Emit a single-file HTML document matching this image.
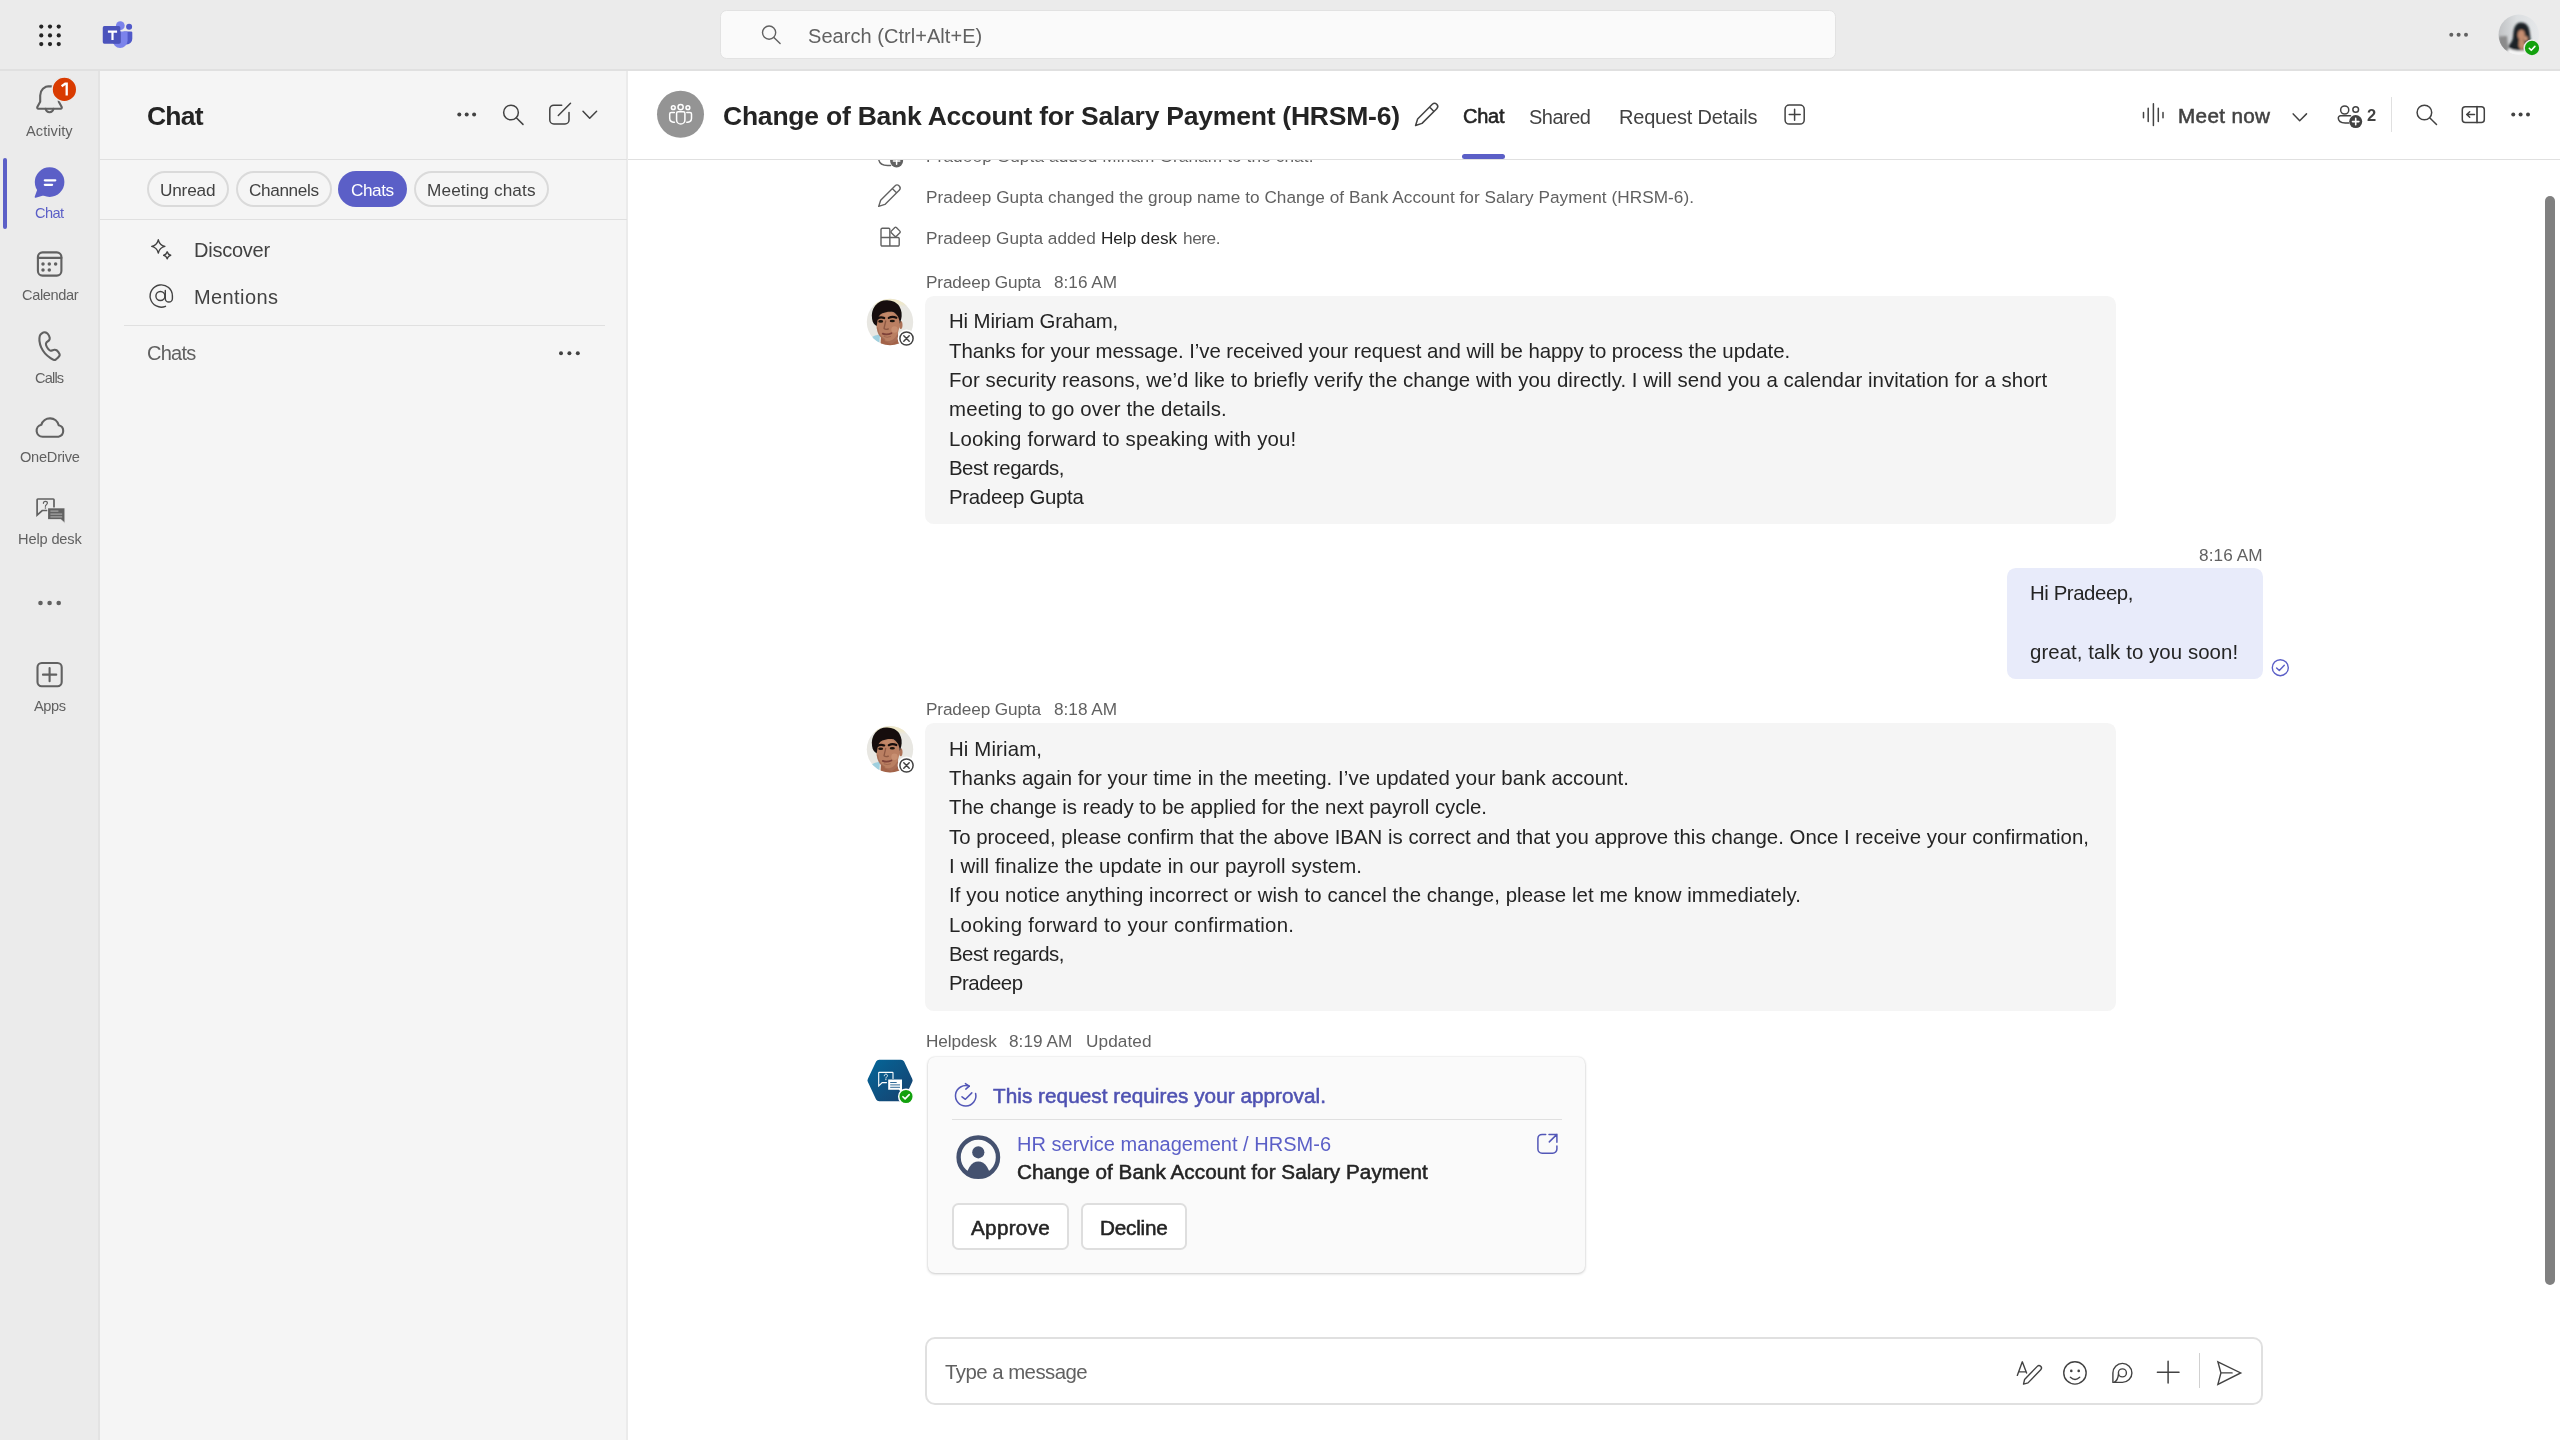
<!DOCTYPE html>
<html lang="en"><head><meta charset="utf-8"><title>Microsoft Teams</title>
<style>
*{box-sizing:border-box;margin:0;padding:0}
html,body{width:2560px;height:1440px;overflow:hidden;background:#fff;font-family:"Liberation Sans",sans-serif}
.a{position:absolute}
.t{position:absolute;white-space:nowrap;line-height:1;will-change:transform}
svg{position:absolute;overflow:visible}

</style></head>
<body>
<!-- ===== backgrounds ===== -->
<div class="a" style="left:0;top:0;width:2560px;height:70px;background:#ebebeb"></div>
<div class="a" style="left:0;top:71px;width:100px;height:1369px;background:#ebebeb"></div>
<div class="a" style="left:100px;top:71px;width:527px;height:1369px;background:#f5f5f5"></div>
<div class="a" style="left:628px;top:71px;width:1932px;height:1369px;background:#fff"></div>
<div class="a" style="left:98px;top:71px;width:2px;height:1369px;background:#e3e3e3"></div>
<div class="a" style="left:626px;top:71px;width:2px;height:1369px;background:#ebebeb"></div>
<div class="a" style="left:0;top:69px;width:2560px;height:2px;background:#e0e0e0"></div>
<!-- list panel dividers -->
<div class="a" style="left:100px;top:159px;width:527px;height:1px;background:#e0e0e0"></div>
<div class="a" style="left:100px;top:219px;width:527px;height:1px;background:#e0e0e0"></div>
<div class="a" style="left:124px;top:325px;width:481px;height:1px;background:#e0e0e0"></div>
<!-- main header divider -->
<div class="a" style="left:628px;top:159px;width:1932px;height:1px;background:#e0e0e0"></div>
<!-- search box -->
<div class="a" style="left:720px;top:10px;width:1116px;height:48.5px;background:#fafafa;border:1px solid #e2e2e2;border-radius:6.5px"></div>
<!-- rail active indicator -->
<div class="a" style="left:3px;top:158px;width:4px;height:71px;background:#5b5fc7;border-radius:2px"></div>
<!-- pills -->
<div class="a" style="left:147px;top:171px;width:82px;height:36px;border:2px solid #dadada;border-radius:18px"></div>
<div class="a" style="left:235.500px;top:171px;width:96px;height:36px;border:2px solid #dadada;border-radius:18px"></div>
<div class="a" style="left:338px;top:171px;width:69px;height:36px;background:#5b5fc7;border-radius:18px"></div>
<div class="a" style="left:414px;top:171px;width:135px;height:36px;border:2px solid #dadada;border-radius:18px"></div>
<!-- tab underline -->
<div class="a" style="left:1462px;top:154px;width:43px;height:4.5px;background:#5b5fc7;border-radius:2.5px"></div>
<!-- header vertical divider -->
<div class="a" style="left:2391px;top:97px;width:1px;height:35px;background:#e0e0e0"></div>
<!-- scrollbar -->
<div class="a" style="left:2545.2px;top:196px;width:9.7px;height:1089px;background:#808080;border-radius:5px"></div>
<!-- bubbles -->
<div class="a" style="left:925px;top:296px;width:1191px;height:228px;background:#f5f5f5;border-radius:8.8px"></div>
<div class="a" style="left:2007px;top:568.2px;width:255.8px;height:110.8px;background:#e8ebfa;border-radius:8.8px"></div>
<div class="a" style="left:925px;top:723px;width:1191px;height:288px;background:#f5f5f5;border-radius:8.8px"></div>
<!-- card -->
<div class="a" style="left:927.5px;top:1057px;width:657.5px;height:215.5px;background:#fafafa;border-radius:7px;box-shadow:0 1px 3px rgba(0,0,0,.18),0 0 2px rgba(0,0,0,.12)"></div>
<div class="a" style="left:952px;top:1119px;width:610px;height:1px;background:#e0e0e0"></div>
<div class="a" style="left:952px;top:1203px;width:117px;height:47px;background:#fff;border:2px solid #dedede;border-radius:6.5px"></div>
<div class="a" style="left:1081px;top:1203px;width:106px;height:47px;background:#fff;border:2px solid #dedede;border-radius:6.5px"></div>
<!-- compose -->
<div class="a" style="left:925px;top:1337px;width:1338px;height:68px;background:#fff;border:2px solid #e0e0e0;border-radius:10px"></div>
<div class="a" style="left:2199px;top:1353px;width:1px;height:35px;background:#d1d1d1"></div>
<svg width="2560" height="1440" viewBox="0 0 2560 1440" style="left:0;top:0" fill="none" stroke-linecap="round" stroke-linejoin="round">
<!-- ===== top bar ===== -->
<g fill="#242424" stroke="none">
<circle cx="41.25" cy="26.6" r="2.1"/><circle cx="50" cy="26.6" r="2.1"/><circle cx="58.75" cy="26.6" r="2.1"/>
<circle cx="41.25" cy="35.4" r="2.1"/><circle cx="50" cy="35.4" r="2.1"/><circle cx="58.75" cy="35.4" r="2.1"/>
<circle cx="41.25" cy="44.1" r="2.1"/><circle cx="50" cy="44.1" r="2.1"/><circle cx="58.75" cy="44.1" r="2.1"/>
</g>
<!-- teams logo -->
<g stroke="none">
<circle cx="129.1" cy="26.7" r="3" fill="#5059c9"/>
<path d="M123.5,31.4h7.6a1.2,1.2 0 0 1 1.2,1.2v6.2a5.6,5.6 0 0 1-5.6,5.6h-3.2z" fill="#5059c9"/>
<circle cx="120.3" cy="25.7" r="4.4" fill="#7b83eb"/>
<path d="M112.6,31.4h13.8a1.2,1.2 0 0 1 1.2,1.2v7.8a7.5,7.5 0 0 1-15,0z" fill="#7b83eb"/>
<path d="M112.6,31.4h8.4v10.6a1.6,1.6 0 0 1-1.6,1.6h-6.2a7.5,7.5 0 0 1-.6,-3.2z" fill="#3d4499" opacity=".55"/>
<rect x="102.75" y="26.1" width="17.6" height="17.6" rx="1.6" fill="#4b53bc"/>
<path d="M107.9,30.6h9.2v2.100h-3.500v7.200h-2.200v-7.200h-3.500z" fill="#fff"/>
</g>
<!-- search icon in box -->
<g stroke="#616161" stroke-width="1.4"><circle cx="769.1" cy="32.6" r="6.6"/><path d="M773.9,37.4L780.1,43.6"/></g>
<!-- top right dots -->
<g fill="#616161" stroke="none"><circle cx="2451.3" cy="34.7" r="2"/><circle cx="2458.6" cy="34.7" r="2"/><circle cx="2466" cy="34.7" r="2"/></g>
<!-- user avatar -->
<defs>
<clipPath id="cpU"><circle cx="2518.75" cy="34.8" r="20.2"/></clipPath>
<linearGradient id="gU" x1="0" x2="1" y1="0" y2="0"><stop offset="0" stop-color="#bfc1c3"/><stop offset=".45" stop-color="#dcdfe1"/><stop offset="1" stop-color="#e6e8ea"/></linearGradient>
<filter id="b1" x="-20%" y="-20%" width="140%" height="140%"><feGaussianBlur stdDeviation="0.8"/></filter>
<filter id="b3" x="-20%" y="-20%" width="140%" height="140%"><feGaussianBlur stdDeviation="0.7"/></filter>
<filter id="b2" x="-20%" y="-20%" width="140%" height="140%"><feGaussianBlur stdDeviation="1.2"/></filter>
</defs>
<g clip-path="url(#cpU)" stroke="none">
<rect x="2498" y="14" width="42" height="42" fill="url(#gU)"/>
<g filter="url(#b1)">
<path d="M2499,36.5l8,-.5l1.5,15h-10z" fill="#8b8b8b"/>
<path d="M2506,56c1,-6 4,-8 9,-9h10c4,1 7,3 8,9z" fill="#f4f4f4"/>
<path d="M2521,22.5c5.5,0 8,4 8.6,9c.4,4 1.4,8 .9,13c-1,4 -5,6 -9.5,6c-5,0 -10.5,0 -12.5,-4c1,-3 3.5,-4 4.3,-8c.7,-4 .2,-7 1.700,-11c1.500,-3.500 3.500,-5 6.500,-5z" fill="#1b2427"/>
<ellipse cx="2521.300" cy="35" rx="3.600" ry="5.200" fill="#c48d70"/>
<path d="M2519,40l5,0l1.500,6l-4,5l-3,-5z" fill="#c08a6c"/>
<ellipse cx="2525.800" cy="38.500" rx="2" ry="2.600" fill="#cf9a7c"/>
</g>
</g>
<circle cx="2532" cy="48" r="7.900" fill="#13a10e" stroke="#ebebeb" stroke-width="1.500"/>
<path d="M2529.300,48.300l2,2l3.600,-3.900" stroke="#fff" stroke-width="1.600"/>

<!-- ===== rail ===== -->
<g stroke="#616161" stroke-width="2.100">
<!-- bell -->
<path d="M49.500,86.100a9.300,9.300 0 0 0-9.300,9.300v6.300l-2.900,5.400a1.100,1.100 0 0 0 1,1.600h22.400a1.100,1.100 0 0 0 1,-1.600l-2.900,-5.400v-6.300a9.300,9.300 0 0 0-9.300,-9.300z"/>
<path d="M45.700,108.900a3.900,3.900 0 0 0 7.700,0"/>
</g>
<circle cx="64.400" cy="89.400" r="12.300" fill="#d93b01" stroke="#ebebeb" stroke-width="1.400"/>
<path d="M61.600,86.200l3.600,-2.500h1.500v11.800" stroke="#fff" stroke-width="2.300" stroke-linecap="butt" stroke-linejoin="miter"/>
<!-- chat (active, filled) -->
<g stroke="none" fill="#5b5fc7">
<circle cx="49.600" cy="182.100" r="14.800"/>
<path d="M37.300,189.500l-2.600,7.200a.8,.8 0 0 0 1,1l9.300,-2.600z"/>
</g>
<g stroke="#fff" stroke-width="2.200"><path d="M44.800,180.300h10.500"/><path d="M44.800,184.800h7.300"/></g>
<!-- calendar -->
<g stroke="#616161" stroke-width="2.100">
<rect x="37.900" y="252.400" width="23.500" height="23.200" rx="4.600"/>
<path d="M37.900,257.900h23.500"/>
</g>
<g fill="#616161" stroke="none"><circle cx="43" cy="264.100" r="1.750"/><circle cx="49.300" cy="264.100" r="1.750"/><circle cx="55.600" cy="264.100" r="1.750"/><circle cx="43" cy="269.900" r="1.750"/><circle cx="49.300" cy="269.900" r="1.750"/></g>
<path d="M45.00,332.33C46.04,332.38 47.00,332.99 47.78,333.89C48.56,334.79 49.46,336.67 49.69,337.71C49.92,338.75 49.72,339.33 49.17,340.14C48.62,340.95 46.91,341.76 46.39,342.57C45.87,343.38 45.75,343.96 46.04,345.00C46.33,346.04 47.37,347.86 48.12,348.82C48.88,349.77 49.51,350.58 50.56,350.73C51.60,350.87 53.33,349.75 54.38,349.69C55.42,349.63 55.94,349.63 56.81,350.38C57.67,351.13 59.18,353.25 59.58,354.20C59.99,355.16 59.81,355.27 59.24,356.11C58.66,356.95 56.98,358.60 56.11,359.24C55.24,359.87 54.95,360.10 54.03,359.93C53.10,359.76 52.06,359.29 50.56,358.19C49.05,357.09 46.56,355.13 45.00,353.33C43.44,351.54 42.11,349.51 41.18,347.43C40.25,345.35 39.68,342.74 39.44,340.83C39.21,338.92 39.44,337.19 39.79,335.97C40.14,334.76 40.66,334.15 41.53,333.54C42.40,332.93 43.96,332.27 45.00,332.33z" stroke="#616161" stroke-width="2.1"/>
<!-- cloud -->
<path d="M42.600,436.700a6,6 0 0 1-1.300,-11.850a9,9 0 0 1 17.400,.5a5.800,5.800 0 0 1-.2,11.350z" stroke="#616161" stroke-width="2.100"/>
<!-- help desk -->
<g stroke="#616161" stroke-width="1.700" stroke-linejoin="miter">
<path d="M47.500,510.500h-5.300l-5.100,4.600v-15.300a.8,.8 0 0 1 .8,-.8h15.300a.8,.8 0 0 1 .8,.8v7.500"/>
</g>
<path d="M43.400,503.300c0,-1.300 .9,-2 2,-2s2,.7 2,1.800c0,1.500 -2,1.600 -2,3.200" stroke="#616161" stroke-width="1.200"/>
<circle cx="45.400" cy="508" r=".8" fill="#616161"/>
<path d="M48,507.900h16.900v15.300l-4,-3.600h-12.900z" fill="#616161" stroke="#ebebeb" stroke-width=".8" stroke-linejoin="miter"/>
<g stroke="#a8a8a8" stroke-width="1.200" stroke-linecap="butt"><path d="M50.400,511.100h8"/><path d="M50.400,514.100h11.800"/><path d="M50.400,516.900h11.800"/></g>
<!-- rail dots -->
<g fill="#616161" stroke="none"><circle cx="40.500" cy="603" r="2.300"/><circle cx="49.600" cy="603" r="2.300"/><circle cx="58.700" cy="603" r="2.300"/></g>
<!-- apps -->
<g stroke="#616161" stroke-width="2.100"><rect x="37.500" y="663" width="24.200" height="23.300" rx="4.200"/><path d="M49.600,668v13.300M42.950,674.650h13.300"/></g>

<!-- ===== list header ===== -->
<g fill="#424242" stroke="none"><circle cx="459.300" cy="114.600" r="2"/><circle cx="466.700" cy="114.600" r="2"/><circle cx="474.100" cy="114.600" r="2"/>
<circle cx="561" cy="353.300" r="2"/><circle cx="569.400" cy="353.300" r="2"/><circle cx="577.800" cy="353.300" r="2"/></g>
<g stroke="#424242" stroke-width="1.500">
<circle cx="511" cy="112.500" r="7.350"/><path d="M516.300,117.800L523,124.400"/>
<path d="M561.700,105.200h-7.900a4,4 0 0 0-4,4v10.800a4,4 0 0 0 4,4h11.200a4,4 0 0 0 4,-4v-7.600"/>
<path d="M558.300,115.500L570.500,103.300"/>
<path d="M583,111.200l6.700,7.100l6.900,-7.100"/>
</g>
<!-- discover sparkles -->
<g stroke="#424242" stroke-width="1.400" stroke-linejoin="round">
<path d="M158.300,239.800q1.300,5.300 6.600,6.600q-5.300,1.300 -6.600,6.600q-1.300,-5.300 -6.600,-6.600q5.300,-1.300 6.600,-6.600z"/>
<path d="M167.200,251.800q.8,2.800 3.500,3.500q-2.700,.7 -3.500,3.500q-.8,-2.800 -3.500,-3.500q2.700,-.7 3.500,-3.500z"/>
</g>
<!-- mentions @ -->
<g stroke="#424242" stroke-width="1.400">
<circle cx="160.400" cy="296" r="4.500"/>
<path d="M165.300,290.400v8.100a3.550,3.550 0 0 0 7.100,0v-2.600a11.150,11.150 0 1 0-6.900,10.400"/>
</g>
</svg>
<svg width="2560" height="1440" viewBox="0 0 2560 1440" style="left:0;top:0" fill="none" stroke-linecap="round" stroke-linejoin="round">
<defs>
<clipPath id="cpP1"><circle cx="890" cy="322" r="23.200"/></clipPath>
<clipPath id="cpP2"><circle cx="890" cy="749.300" r="23.200"/></clipPath>
<linearGradient id="gH" x1="0" y1="0" x2="1" y2="1"><stop offset="0" stop-color="#04679a"/><stop offset="1" stop-color="#173f6c"/></linearGradient>
<clipPath id="cpRing"><circle cx="978.300" cy="1157.200" r="19.800"/></clipPath>
<g id="pencil"><path d="M.4,0L6.4,-3.1H27.2A3.1,3.1 0 0 1 27.2,3.1H6.4Z M23.3,-3.1V3.1"/></g>
<g id="face" stroke="none">
<rect x="-24" y="-24" width="48" height="48" fill="#e8e7e2"/>
<rect x="-24" y="-24" width="48" height="7" fill="#f0e8c4" opacity=".8" filter="url(#b2)"/>
<g filter="url(#b3)">
<path d="M-24,24l2,-7l7,-3.500l5,-1l-1,11.500z" fill="#9fd0df"/>
<path d="M-9.500,24l.5,-9l3,-4h13l2.500,5l5.500,4v4z" fill="#a3634a"/>
<path d="M-6.500,8h14.500l-.5,10l-6,4l-7,-3z" fill="#a86d55"/>
<path d="M-13.600,-2c-.4,4 0,8 1.200,11.500c1.500,4.500 5,8.500 9.500,9.500c4,.6 8,-2.500 10,-6.500c1.800,-3.500 2.600,-8 2.600,-14c-1,-6 -5,-9.500 -11.500,-9.500c-7,0 -11.200,3.500 -11.800,9z" fill="#ba7f62"/>
<ellipse cx="10.800" cy="3" rx="1.700" ry="4" fill="#ad7358"/>
<ellipse cx="4.500" cy="7.500" rx="3.200" ry="3.200" fill="#cd9678" opacity=".7"/>
<ellipse cx="-1.500" cy="-7.200" rx="6" ry="2" fill="#c58b6c" opacity=".7"/>
<path d="M-13.300,4c-2.200,-1 -4.200,-3.200 -4.600,-7c-.8,-5 .2,-10 3.200,-13.500c3,-4 7.500,-5.500 12,-5.300c5,.2 9.500,2 12,6c2.500,4 3,9 1.800,13.300l-1.300,4.200c-.3,-3.500 -1,-6.500 -3,-8.800c-1.500,-1.800 -3,-2.800 -5,-3.100c-3,-.5 -6.500,.3 -9.500,1.500c-3,1.300 -4.300,4 -4.800,7.300c-.3,2 -.5,4 -.8,5.400z" fill="#120f0c"/>
<path d="M-12.800,-3.300q3.400,-2.100 7,-.6" stroke="#160e09" stroke-width="2.200" fill="none"/>
<path d="M-1.200,-4.100q3.600,-2 7.500,-.2" stroke="#160e09" stroke-width="2.200" fill="none"/>
<ellipse cx="-9.300" cy="-.6" rx="2.500" ry="1.300" fill="#1f120c"/>
<ellipse cx="2.300" cy="-1" rx="2.600" ry="1.300" fill="#1f120c"/>
<path d="M-4.300,-1l-1.700,7.500q1.800,1.600 4.400,.4" stroke="#8d5843" stroke-width="1.300" fill="none"/>
<path d="M-7.300,11.600q4,1.800 8.800,-.4" stroke="#7e4238" stroke-width="1.700" fill="none"/>
<path d="M-6,14.600q3,1.500 6.500,0" stroke="#a0664f" stroke-width="1" fill="none"/>
<path d="M-12.500,6c.5,5 3,9.500 7,11.500" stroke="#9a6049" stroke-width="1.500" fill="none" opacity=".6"/>
</g>
</g>
<g id="xbadge">
<circle r="8.100" fill="#fff" stroke="#fff" stroke-width="1.600"/>
<circle r="6.600" fill="#fff" stroke="#424242" stroke-width="1.500"/>
<path d="M-2.700,-2.700L2.700,2.700M2.700,-2.700L-2.700,2.700" stroke="#424242" stroke-width="1.500"/>
</g>
</defs>

<!-- ===== main header ===== -->
<circle cx="680.500" cy="114.300" r="23.500" fill="#949494"/>
<g stroke="#fff" stroke-width="1.500">
<circle cx="680.600" cy="107.100" r="2.600"/><circle cx="673.300" cy="107.700" r="1.900"/><circle cx="687.900" cy="107.700" r="1.900"/>
<path d="M678,111.800h5.400a1.500,1.500 0 0 1 1.500,1.500v6.600a4.150,4.150 0 0 1-8.300,0v-6.600a1.500,1.500 0 0 1 1.500,-1.500z"/>
<path d="M674.400,112.400h-3.200a1.500,1.500 0 0 0-1.500,1.500v4.500a4,4 0 0 0 4.700,3.900"/>
<path d="M686.800,112.400h3.200a1.500,1.500 0 0 1 1.500,1.500v4.500a4,4 0 0 1-4.700,3.900"/>
</g>
<g stroke="#424242" stroke-width="1.500">
<use href="#pencil" transform="translate(1415.300,125.700) rotate(-45)"/>
<rect x="1785.100" y="105.100" width="19.100" height="19" rx="4.200"/>
<path d="M1789.200,114.600h11M1794.600,109.200v11"/>
<!-- meet now bars -->
<path d="M2143.500,112.600v5.200M2148.200,108.300v13.100M2153.400,103.700v21.800M2158.300,108.300v13.100M2163,112.600v5.200"/>
<path d="M2293.200,113.900l6.500,6.800l6.800,-6.800"/>
<!-- people add -->
<circle cx="2344.700" cy="110" r="4.050"/><circle cx="2355.700" cy="109.500" r="2.850"/>
<path d="M2350.500,115.800h-10a2.200,2.200 0 0 0-2.200,2.200c0,3.600 3,4.900 6.900,4.900h3.600"/>
<!-- search -->
<circle cx="2424.400" cy="112.500" r="7.300"/><path d="M2429.700,117.800L2436.500,124.500"/>
<!-- panel -->
<rect x="2462.300" y="106.700" width="22" height="15.700" rx="3"/><path d="M2477,106.700v15.700" stroke-width="1.700"/>
<path d="M2474.500,114.500h-7.800M2469.700,111.700l-3,2.800l3,2.800"/>
</g>
<circle cx="2355.700" cy="121.600" r="6.500" fill="#424242"/>
<path d="M2352.500,121.600h6.400M2355.700,118.400v6.400" stroke="#fff" stroke-width="1.600"/>
<g fill="#424242"><circle cx="2513.250" cy="114.600" r="2"/><circle cx="2520.600" cy="114.600" r="2"/><circle cx="2528" cy="114.600" r="2"/></g>

<!-- ===== system message icons ===== -->
<g stroke="#616161" stroke-width="1.400">
<use href="#pencil" transform="translate(878.400,206.700) rotate(-45) scale(.97)"/>
<!-- apps-add -->
<path d="M881,237.500v-8a1.200,1.200 0 0 1 1.200,-1.200h6.450a1.200,1.200 0 0 1 1.200,1.200v16.500M881,237.500h17a1.200,1.200 0 0 1 1.200,1.200v6.100a1.200,1.200 0 0 1-1.200,1.200h-15.800a1.200,1.200 0 0 1-1.200,-1.200z"/>
<rect x="-3.600" y="-3.600" width="7.200" height="7.200" rx="1.100" transform="translate(895.600,231.900) rotate(45)"/>
</g>

<!-- clipped people-add row -->
<clipPath id="cpS0"><rect x="628" y="160" width="1932" height="40"/></clipPath>
<g clip-path="url(#cpS0)">
<path d="M878.600,158.500c.3,4.500 3.500,7 9,7h3" stroke="#616161" stroke-width="1.400"/>
<circle cx="896.600" cy="161" r="6.500" fill="#616161"/>
<path d="M893.400,161h6.400M896.600,157.800v6.400" stroke="#fff" stroke-width="1.500"/>
</g>
<!-- ===== avatars ===== -->
<g clip-path="url(#cpP1)"><use href="#face" transform="translate(890,322)"/></g>
<use href="#xbadge" transform="translate(906.5,338.5)"/>
<g clip-path="url(#cpP2)"><use href="#face" transform="translate(890,749.300)"/></g>
<use href="#xbadge" transform="translate(906.5,765.5)"/>

<!-- sent check -->
<circle cx="2280.300" cy="667.700" r="8" stroke="#5b5fc7" stroke-width="1.400"/>
<path d="M2276.600,667.900l2.700,2.700l5,-5.300" stroke="#5b5fc7" stroke-width="1.400"/>

<!-- helpdesk hexagon -->
<path d="M879.200,1059.700h21.800a3.600,3.600 0 0 1 3.100,1.800l8.100,17.200a3.600,3.600 0 0 1 0,3.400l-8.100,17.300a3.600,3.600 0 0 1-3.100,1.800h-21.800a3.600,3.600 0 0 1-3.100,-1.800l-8.200,-17.300a3.600,3.600 0 0 1 0,-3.400l8.200,-17.200a3.600,3.600 0 0 1 3.100,-1.800z" fill="url(#gH)"/>
<path d="M886.500,1082.600h-4.300l-3.500,3.300v-13a.5,.5 0 0 1 .5,-.5h13.300a.5,.5 0 0 1 .5,.5v5.500" stroke="#fff" stroke-width="1.100" stroke-linejoin="miter"/>
<path d="M884.300,1075.800c0,-1 .7,-1.600 1.600,-1.600s1.600,.6 1.600,1.400c0,1.200 -1.600,1.300 -1.600,2.600" stroke="#fff" stroke-width=".9"/>
<circle cx="885.900" cy="1079.600" r=".6" fill="#fff"/>
<path d="M888.200,1079.600h13.800v12.800l-3.200,-2.700h-10.600z" fill="#fff"/>
<g stroke="#1b5a8c" stroke-width=".9" stroke-linecap="butt"><path d="M890.200,1082.500h6.500"/><path d="M890.200,1084.900h9.800"/><path d="M890.200,1087.300h9.800"/></g>
<circle cx="906" cy="1096.500" r="7.300" fill="#13a10e" stroke="#fff" stroke-width="1.500"/>
<path d="M902.900,1096.700l2.200,2.200l4.100,-4.300" stroke="#fff" stroke-width="1.600"/>

<!-- card icons -->
<g stroke="#5357b7" stroke-width="1.500">
<path d="M969.300,1086.300a10.200,10.200 0 1 0 6.300,7.200"/>
<path d="M965.400,1083.600l3.900,2.600l-3.500,2.900"/>
<path d="M962,1096.800l3.400,2.500l6.400,-6.400"/>
<path d="M1545.700,1134.400h-3.600a4.200,4.200 0 0 0-4.200,4.200v10.500a4.200,4.200 0 0 0 4.200,4.200h10.600a4.200,4.200 0 0 0 4.200,-4.200v-3.200"/>
<path d="M1549,1134.400h7.900v7.800M1556.900,1134.400l-7.600,7.500"/>
</g>
<circle cx="978.300" cy="1157.200" r="19.700" stroke="#44516f" stroke-width="4.400"/>
<circle cx="978.300" cy="1152.300" r="6.100" fill="#44516f"/>
<g clip-path="url(#cpRing)"><ellipse cx="978.300" cy="1180" rx="12.500" ry="18.400" fill="#44516f"/></g>

<!-- compose icons -->
<g stroke="#424242" stroke-width="1.400">
<path d="M2017.300,1375.400l5,-13.600l4.300,11.200M2019.300,1371.900h6.600"/>
<g transform="translate(2023.300,1384.300) rotate(-46)"><path d="M.3,0l4,-2.400h18.300a2.400,2.400 0 0 1 0,4.800h-18.300z"/></g>
<circle cx="2074.950" cy="1372.900" r="11.200"/>
<path d="M2070.400,1377.300q4.600,4.400 9.300,0"/>
<path d="M2112.900,1382.400v-9.500a9.500,9.500 0 1 1 9.500,9.500z"/>
<circle cx="2122.400" cy="1372.900" r="4"/>
<path d="M2118.500,1374.100c-.4,4 -2,7 -4.300,8.200"/>
<path d="M2157.400,1372.200h21.600M2168.100,1361.300v21.800" stroke-width="1.500"/>
<path d="M2217.900,1361.800l22.800,11.100l-22.800,11.500l3,-11.500zM2220.900,1372.900h11.200" stroke-linejoin="miter"/>
</g>
<g fill="#424242"><circle cx="2071.300" cy="1370.900" r="1.300"/><circle cx="2078.700" cy="1370.900" r="1.300"/></g>
</svg>

<div class="t" id="search" style="left:808.30px;top:26.07px;font-size:20px;color:#616161;letter-spacing:0.044px;">Search (Ctrl+Alt+E)</div>
<div class="t" id="r1" style="left:26.40px;top:123.64px;font-size:14.6px;color:#616161;letter-spacing:0.057px;">Activity</div>
<div class="t" id="r2" style="left:35.30px;top:205.94px;font-size:14.6px;color:#5b5fc7;letter-spacing:-0.567px;">Chat</div>
<div class="t" id="r3" style="left:21.70px;top:288.14px;font-size:14.6px;color:#616161;letter-spacing:-0.371px;">Calendar</div>
<div class="t" id="r4" style="left:35.30px;top:370.94px;font-size:14.6px;color:#616161;letter-spacing:-0.825px;">Calls</div>
<div class="t" id="r5" style="left:19.80px;top:449.94px;font-size:14.6px;color:#616161;letter-spacing:-0.243px;">OneDrive</div>
<div class="t" id="r6" style="left:18.00px;top:532.04px;font-size:14.6px;color:#616161;letter-spacing:-0.138px;">Help desk</div>
<div class="t" id="r7" style="left:33.80px;top:698.64px;font-size:14.6px;color:#616161;letter-spacing:-0.367px;">Apps</div>
<div class="t" id="lt" style="left:147.20px;top:102.57px;font-size:26.5px;color:#242424;font-weight:700;letter-spacing:-0.767px;">Chat</div>
<div class="t" id="p1" style="left:160.30px;top:181.84px;font-size:17.2px;color:#424242;letter-spacing:-0.180px;">Unread</div>
<div class="t" id="p2" style="left:248.60px;top:181.84px;font-size:17.2px;color:#424242;letter-spacing:-0.371px;">Channels</div>
<div class="t" id="p3" style="left:350.80px;top:181.84px;font-size:17.2px;color:#ffffff;letter-spacing:-0.450px;">Chats</div>
<div class="t" id="p4" style="left:427.00px;top:181.84px;font-size:17.2px;color:#424242;letter-spacing:0.125px;">Meeting chats</div>
<div class="t" id="disc" style="left:193.90px;top:240.07px;font-size:20px;color:#424242;letter-spacing:-0.243px;">Discover</div>
<div class="t" id="ment" style="left:193.90px;top:286.67px;font-size:20px;color:#424242;letter-spacing:0.400px;">Mentions</div>
<div class="t" id="chats" style="left:147.20px;top:342.97px;font-size:20px;color:#616161;letter-spacing:-0.750px;">Chats</div>
<div class="t" id="title" style="left:722.50px;top:102.57px;font-size:26.5px;color:#242424;font-weight:700;letter-spacing:-0.227px;">Change of Bank Account for Salary Payment (HRSM-6)</div>
<div class="t" id="tab1" style="left:1462.50px;top:106.07px;font-size:20px;color:#242424;-webkit-text-stroke:0.55px #242424;letter-spacing:-0.267px;">Chat</div>
<div class="t" id="tab2" style="left:1529.30px;top:106.57px;font-size:20px;color:#424242;letter-spacing:-0.500px;">Shared</div>
<div class="t" id="tab3" style="left:1619.30px;top:106.57px;font-size:20px;color:#424242;letter-spacing:-0.193px;">Request Details</div>
<div class="t" id="meet" style="left:2177.50px;top:105.88px;font-size:20.7px;color:#424242;-webkit-text-stroke:0.55px #424242;letter-spacing:0.329px;">Meet now</div>
<div class="t" id="two" style="left:2367.00px;top:107.03px;font-size:16.5px;color:#424242;font-weight:700;letter-spacing:-0.700px;">2</div>
<div class="a" style="left:0;top:160px;width:2560px;height:60px;overflow:hidden"><div class="t" id="s0" style="left:925.50px;top:-11.96px;font-size:17.2px;color:#616161;letter-spacing:0.118px;">Pradeep Gupta added Miriam Graham to the chat.</div></div>
<div class="t" id="s1" style="left:925.50px;top:189.04px;font-size:17.2px;color:#616161;letter-spacing:0.051px;">Pradeep Gupta changed the group name to Change of Bank Account for Salary Payment (HRSM-6).</div>
<div class="t" id="s2a" style="left:925.50px;top:230.04px;font-size:17.2px;color:#616161;letter-spacing:0.033px;">Pradeep Gupta added</div>
<div class="t" id="s2b" style="left:1101.00px;top:230.04px;font-size:17.2px;color:#242424;letter-spacing:-0.050px;">Help desk</div>
<div class="t" id="s2c" style="left:1182.50px;top:230.04px;font-size:17.2px;color:#616161;letter-spacing:-0.425px;">here.</div>
<div class="t" id="n1" style="left:925.75px;top:274.04px;font-size:17.2px;color:#616161;letter-spacing:-0.125px;">Pradeep Gupta</div>
<div class="t" id="n1t" style="left:1053.75px;top:274.04px;font-size:17.2px;color:#616161;">8:16 AM</div>
<div class="t" id="m1_0" style="left:949.00px;top:311.23px;font-size:20.4px;color:#242424;letter-spacing:-0.116px;">Hi Miriam Graham,</div>
<div class="t" id="m1_1" style="left:949.00px;top:340.56px;font-size:20.4px;color:#242424;letter-spacing:-0.049px;">Thanks for your message. I’ve received your request and will be happy to process the update.</div>
<div class="t" id="m1_2" style="left:949.00px;top:369.89px;font-size:20.4px;color:#242424;letter-spacing:0.055px;">For security reasons, we’d like to briefly verify the change with you directly. I will send you a calendar invitation for a short</div>
<div class="t" id="m1_3" style="left:949.00px;top:399.22px;font-size:20.4px;color:#242424;letter-spacing:0.152px;">meeting to go over the details.</div>
<div class="t" id="m1_4" style="left:949.00px;top:428.55px;font-size:20.4px;color:#242424;letter-spacing:0.168px;">Looking forward to speaking with you!</div>
<div class="t" id="m1_5" style="left:949.00px;top:457.88px;font-size:20.4px;color:#242424;letter-spacing:-0.483px;">Best regards,</div>
<div class="t" id="m1_6" style="left:949.00px;top:487.21px;font-size:20.4px;color:#242424;letter-spacing:-0.296px;">Pradeep Gupta</div>
<div class="t" id="ot" style="left:2198.50px;top:547.04px;font-size:17.2px;color:#616161;letter-spacing:0.100px;">8:16 AM</div>
<div class="t" id="o1" style="left:2030.40px;top:583.13px;font-size:20.4px;color:#242424;letter-spacing:-0.430px;">Hi Pradeep,</div>
<div class="t" id="o2" style="left:2030.40px;top:642.03px;font-size:20.4px;color:#242424;letter-spacing:0.078px;">great, talk to you soon!</div>
<div class="t" id="n2" style="left:925.75px;top:700.84px;font-size:17.2px;color:#616161;letter-spacing:-0.125px;">Pradeep Gupta</div>
<div class="t" id="n2t" style="left:1053.75px;top:700.84px;font-size:17.2px;color:#616161;">8:18 AM</div>
<div class="t" id="m2_0" style="left:949.00px;top:738.53px;font-size:20.4px;color:#242424;letter-spacing:0.133px;">Hi Miriam,</div>
<div class="t" id="m2_1" style="left:949.00px;top:767.86px;font-size:20.4px;color:#242424;letter-spacing:0.060px;">Thanks again for your time in the meeting. I’ve updated your bank account.</div>
<div class="t" id="m2_2" style="left:949.00px;top:797.19px;font-size:20.4px;color:#242424;letter-spacing:-0.007px;">The change is ready to be applied for the next payroll cycle.</div>
<div class="t" id="m2_3" style="left:949.00px;top:826.52px;font-size:20.4px;color:#242424;letter-spacing:0.007px;">To proceed, please confirm that the above IBAN is correct and that you approve this change. Once I receive your confirmation,</div>
<div class="t" id="m2_4" style="left:949.00px;top:855.85px;font-size:20.4px;color:#242424;letter-spacing:0.081px;">I will finalize the update in our payroll system.</div>
<div class="t" id="m2_5" style="left:949.00px;top:885.18px;font-size:20.4px;color:#242424;letter-spacing:0.074px;">If you notice anything incorrect or wish to cancel the change, please let me know immediately.</div>
<div class="t" id="m2_6" style="left:949.00px;top:914.51px;font-size:20.4px;color:#242424;letter-spacing:0.264px;">Looking forward to your confirmation.</div>
<div class="t" id="m2_7" style="left:949.00px;top:943.84px;font-size:20.4px;color:#242424;letter-spacing:-0.483px;">Best regards,</div>
<div class="t" id="m2_8" style="left:949.00px;top:973.17px;font-size:20.4px;color:#242424;letter-spacing:-0.517px;">Pradeep</div>
<div class="t" id="h1" style="left:926.00px;top:1033.04px;font-size:17.2px;color:#616161;letter-spacing:-0.114px;">Helpdesk</div>
<div class="t" id="h2" style="left:1009.40px;top:1033.04px;font-size:17.2px;color:#616161;letter-spacing:0.050px;">8:19 AM</div>
<div class="t" id="h3" style="left:1086.00px;top:1033.04px;font-size:17.2px;color:#616161;letter-spacing:0.083px;">Updated</div>
<div class="t" id="c1" style="left:993.00px;top:1085.88px;font-size:20.7px;color:#4f52b2;-webkit-text-stroke:0.55px #4f52b2;letter-spacing:0.051px;">This request requires your approval.</div>
<div class="t" id="c2" style="left:1016.60px;top:1133.67px;font-size:20px;color:#5b5fc7;letter-spacing:0.021px;">HR service management / HRSM-6</div>
<div class="t" id="c3" style="left:1016.60px;top:1162.18px;font-size:20.7px;color:#242424;-webkit-text-stroke:0.55px #242424;letter-spacing:0.037px;">Change of Bank Account for Salary Payment</div>
<div class="t" id="b1" style="left:971.25px;top:1217.88px;font-size:20.7px;color:#242424;-webkit-text-stroke:0.55px #242424;letter-spacing:0.292px;">Approve</div>
<div class="t" id="b2" style="left:1100.30px;top:1217.88px;font-size:20.7px;color:#242424;-webkit-text-stroke:0.55px #242424;letter-spacing:-0.217px;">Decline</div>
<div class="t" id="cmp" style="left:944.60px;top:1361.73px;font-size:20.4px;color:#616161;letter-spacing:-0.531px;">Type a message</div>
<script>(function(){var w=window.innerWidth||2560;if(Math.abs(w-2560)>40){document.documentElement.style.zoom=w/2560;}})();</script>
</body></html>
